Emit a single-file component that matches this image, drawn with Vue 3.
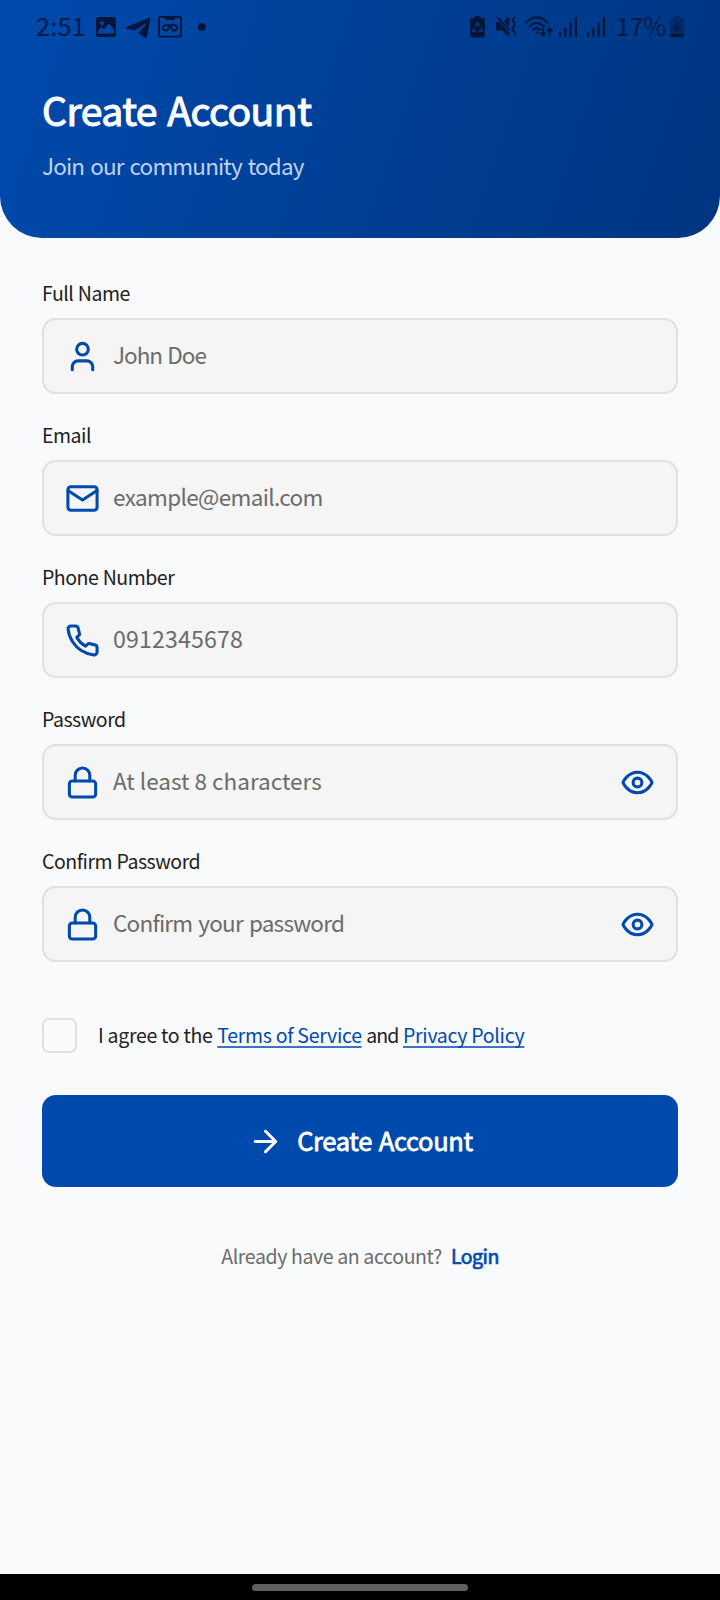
<script setup>
const fields = [
  { label: 'Full Name', placeholder: 'John Doe', icon: 'user', key: 'name' },
  { label: 'Email', placeholder: 'example@email.com', icon: 'mail', key: 'email' },
  { label: 'Phone Number', placeholder: '0912345678', icon: 'phone', key: 'phone' },
  { label: 'Password', placeholder: 'At least 8 characters', icon: 'lock', key: 'password', secret: true },
  { label: 'Confirm Password', placeholder: 'Confirm your password', icon: 'lock', key: 'confirm', secret: true },
]
</script>

<template>
  <div class="screen">
    <header class="hero">
      <div class="status">
        <span class="clock">2:51</span>
        <svg class="s-image" width="20" height="20" viewBox="0 0 20 20">
          <path fill-rule="evenodd" d="M2.5 0h15A2.500 2.500 0 0 1 20 2.500v15a2.500 2.500 0 0 1-2.500 2.500h-15A2.500 2.500 0 0 1 0 17.500v-15A2.500 2.500 0 0 1 2.500 0zM2 16.500h16v-3.500l-5.500-6.500-4.500 6-2.500-2.500L2 14zM6 4.200a1.900 1.900 0 1 0 0 3.800 1.900 1.900 0 0 0 0-3.800z" />
        </svg>
        <svg class="s-send" width="25" height="22" viewBox="0 0 25 22">
          <path d="M.4 10.200 22.800.8q1.700-.5 1.400 1.300L21 19.800q-.5 1.900-2.200.9l-6.300-4.600 7.600-9.300q.5-1-.6-.5L8.500 13.400.6 11.500q-1-.6-.2-1.300z" />
        </svg>
        <svg class="s-tape" width="24" height="22" viewBox="0 0 24 22">
          <rect x="1" y="1" width="22" height="19.600" rx="1.500" fill="none" stroke="currentColor" stroke-width="1.900" />
          <path d="M6 0h12l-1.500 4h-9z" />
          <path d="M7.700 9.100h8.600a2.700 2.700 0 1 1-2.700 2.700q0-1.200-1.600-1.200t-1.600 1.200a2.700 2.700 0 1 1-2.700-2.700z" fill="none" stroke="currentColor" stroke-width="1.800" />
        </svg>
        <i class="s-dot"></i>
        <span class="grow"></span>
        <svg class="s-saver" width="15" height="22" viewBox="0 0 15 22">
          <path d="M4.500 2V.8Q4.500 0 5.300 0h4.400q.8 0 .8.800V2H13q2 0 2 2v15.500q0 2-2 2H2q-2 0-2-2V4q0-2 2-2z" />
          <g fill="none" stroke="#023f98" stroke-width="1.300">
            <path d="M5.300 10.200 7.500 7l2.200 3.200M11 12l1.300 3.200H9M6 15.200H2.700L4 12" />
          </g>
        </svg>
        <svg class="s-mute" width="20" height="21" viewBox="0 0 20 21">
          <path d="M0 6h3.200L13.300 16.500V20.500L6.500 14.500H0zM7.800 5.200 13.300.3v10.900z" />
          <path d="M1.200 1.200 13.300 14.200" fill="none" stroke="currentColor" stroke-width="1.800" />
          <path d="M18.800 1.500q-3.800 2.200-1.300 4.500t0 4.500 0 4.500 1.300 4.500" fill="none" stroke="currentColor" stroke-width="1.900" />
        </svg>
        <svg class="s-wifi" width="29" height="22" viewBox="0 0 29 22">
          <g fill="none" stroke="currentColor" stroke-width="2.200" stroke-linecap="round">
            <path d="M1.200 6.200q10.500-9.600 21 0M4.600 10.200q7-6.600 14.200 0M8.200 13.600q3.500-2.900 6.800-.3" />
            <circle cx="11.800" cy="17" r=".5" />
            <path d="M18.200 12.500v6.500m-2.200-2 2.200 2.500 2.200-2.500M24.800 19v-6.500m-2.200 2.200 2.200-2.500 2.200 2.500" stroke-width="1.800" />
          </g>
        </svg>
        <svg v-for="n in 2" :key="n" class="s-signal" width="18" height="20" viewBox="0 0 18 20">
          <path d="M0 15.500h2.200V20H0zM5.200 11h2.200v9H5.200zM10.500 5.500h2.200V20h-2.200zM15.800 0H18v20h-2.200z" />
        </svg>
        <span class="percent">17%</span>
        <svg class="s-battery" width="14" height="22" viewBox="0 0 14 22">
          <path opacity=".4" d="M4 2V.8Q4 0 4.800 0h4.400q.8 0 .8.800V2h2q2 0 2 2v14H0V4q0-2 2-2z" />
          <path d="M0 18h14v1.500q0 1.800-2 1.800H2q-2 0-2-1.800z" />
          <path opacity=".6" d="M8.500 5.500 3 12h3l-.8 5L11 10.500H8z" />
        </svg>
      </div>
      <h1>Create Account</h1>
      <p class="tagline">Join our community today</p>
    </header>

    <main class="form">
      <div v-for="f in fields" :key="f.key" class="field" :class="f.key">
        <label>{{ f.label }}</label>
        <div class="input">
          <svg class="icon" viewBox="0 0 24 24">
            <template v-if="f.icon === 'user'">
              <path d="M19 21v-2a4 4 0 0 0-4-4H9a4 4 0 0 0-4 4v2" /><circle cx="12" cy="7" r="4" />
            </template>
            <template v-else-if="f.icon === 'mail'">
              <rect x="2" y="4" width="20" height="16" rx="2" /><path d="m22 6.500-10 6.500L2 6.500" />
            </template>
            <path v-else-if="f.icon === 'phone'" d="M22 16.920v3a2 2 0 0 1-2.180 2 19.790 19.790 0 0 1-8.630-3.070 19.500 19.500 0 0 1-6-6 19.790 19.790 0 0 1-3.070-8.670A2 2 0 0 1 4.110 2h3a2 2 0 0 1 2 1.720 12.840 12.840 0 0 0 .7 2.810 2 2 0 0 1-.45 2.110L8.090 9.910a16 16 0 0 0 6 6l1.270-1.270a2 2 0 0 1 2.110-.45 12.840 12.840 0 0 0 2.810.7A2 2 0 0 1 22 16.920z" />
            <template v-else>
              <rect x="3" y="11" width="18" height="11" rx="2" /><path d="M7 11V7a5 5 0 0 1 10 0v4" />
            </template>
          </svg>
          <span class="placeholder">{{ f.placeholder }}</span>
          <svg v-if="f.secret" class="icon" viewBox="0 0 24 24">
            <path d="M2 12s3-7 10-7 10 7 10 7-3 7-10 7-10-7-10-7Z" /><circle cx="12" cy="12" r="3" />
          </svg>
        </div>
      </div>

      <div class="agree">
        <i class="checkbox"></i>
        <p>
          <span class="lead">I agree to the</span>
          <a>Terms of Service</a>
          <span class="and">and</span>
          <a>Privacy Policy</a>
        </p>
      </div>

      <button class="submit" type="button">
        <svg class="icon" viewBox="0 0 24 24"><path d="M5 12h14M12 5l7 7-7 7" /></svg>
        <span>Create Account</span>
      </button>

      <p class="login"><span>Already have an account?</span><a>Login</a></p>
    </main>

    <footer class="navbar"><i></i></footer>
  </div>
</template>

<style>
body { margin: 0; background: #f8fafc; }
</style>

<style scoped>
.screen {
  width: 720px;
  height: 1600px;
  display: flex;
  flex-direction: column;
  background: #f8fafc;
  font-family: "Noto Sans CJK JP", "Noto Sans", sans-serif;
  overflow: hidden;
  white-space: nowrap;
}
.screen * { box-sizing: border-box; }
svg { display: block; flex: none; fill: currentColor; }
h1, p { margin: 0; font-weight: 400; }
.grow { flex: 1; }

.hero {
  height: 238px;
  flex: none;
  border-radius: 0 0 42px 42px;
  background: linear-gradient(108.3deg, #004aad 0%, #003580 100%);
  color: #fff;
}
.status {
  height: 53px;
  padding: 0 36px;
  display: flex;
  align-items: center;
  color: #00163a;
}
.clock, .percent {
  font-size: 25.200px;
  line-height: 51px;
  padding-bottom: 2px;
  letter-spacing: -0.500px;
  color: #001c48;
}
.clock { width: 60px; letter-spacing: 0.200px; }
.percent { width: 54px; margin-left: 11px; }
.s-send { margin-left: 10px; margin-top: 2px; }
.s-tape { margin-left: 7px; }
.s-dot { width: 8px; height: 8px; border-radius: 50%; background: currentColor; margin-left: 16px; }
.s-mute { margin-left: 11px; }
.s-wifi { margin-left: 9px; }
.s-signal { margin-left: 5px; }
.s-signal + .s-signal { margin-left: 10px; }

h1 {
  height: 58px;
  margin: 27px 0 0 42px;
  font-size: 39.200px;
  line-height: 58px;
  letter-spacing: -0.550px;
  word-spacing: 2px;
  -webkit-text-stroke: 1.100px #fff;
}
.tagline {
  margin: 9px 0 0 42px;
  font-size: 22.500px;
  line-height: 36px;
  letter-spacing: -0.860px;
  word-spacing: 1.800px;
  color: #bfd4f3;
}

.form {
  flex: 1;
  padding: 37px 42px 0;
}
.field { height: 142px; }
.field label {
  display: block;
  height: 43px;
  font-size: 19.500px;
  line-height: 36px;
  letter-spacing: -0.480px;
  word-spacing: 0.500px;
  color: #1f2020;
}
.input {
  height: 76px;
  border: 2px solid #e0e0e0;
  border-radius: 14px;
  background: #f5f5f5;
  display: flex;
  align-items: center;
  padding: 0 21px;
  color: #004aad;
}
.icon {
  width: 35px;
  height: 35px;
  fill: none;
  stroke: currentColor;
  stroke-width: 2.100;
  stroke-linecap: round;
  stroke-linejoin: round;
}
.placeholder {
  flex: 1;
  margin-left: 13px;
  padding-bottom: 5px;
  font-size: 22.500px;
  letter-spacing: -0.650px;
  color: #6b6b6b;
}
.name .placeholder { letter-spacing: -1px; word-spacing: 1.200px; }
.phone .placeholder { font-size: 23.200px; letter-spacing: 0.120px; }
.password .placeholder { letter-spacing: 0; }
.confirm .placeholder { letter-spacing: -0.770px; word-spacing: 1.700px; }

.agree {
  display: flex;
  align-items: center;
  height: 35px;
  margin-top: 33px;
  font-size: 19.500px;
  letter-spacing: -0.290px;
  color: #222;
}
.agree p { display: flex; gap: 4.700px; padding-bottom: 2px; }
.agree .and { letter-spacing: -1px; }
.checkbox {
  width: 35px;
  height: 35px;
  margin-right: 21px;
  border: 2px solid #e0e0e0;
  border-radius: 7px;
}
.agree a {
  color: #004aad;
  text-decoration: underline;
  text-decoration-thickness: 1.500px;
  text-decoration-color: #3f74bd;
  text-decoration-skip-ink: none;
  text-underline-offset: 3px;
}

.submit {
  width: 636px;
  height: 92px;
  margin-top: 42px;
  border: 0;
  border-radius: 14px;
  background: #004aad;
  color: #fff;
  display: flex;
  align-items: center;
  justify-content: center;
  gap: 14px;
  padding: 0 0 0 1px;
  font: 25.500px "Noto Sans CJK JP", "Noto Sans", sans-serif;
  letter-spacing: -0.350px;
  word-spacing: 1.500px;
  -webkit-text-stroke: 0.800px #fff;
}
.submit span { padding-bottom: 3px; }
.login {
  margin-top: 53px;
  display: flex;
  justify-content: center;
  gap: 9px;
  font-size: 19.500px;
  line-height: 31px;
  letter-spacing: -0.370px;
  color: #6b6b6b;
}
.login a { color: #004aad; letter-spacing: -0.500px; -webkit-text-stroke: 0.700px #004aad; }

.navbar {
  height: 26px;
  flex: none;
  background: #000;
  display: flex;
  justify-content: center;
  padding-top: 10px;
}
.navbar i { width: 216px; height: 7px; border-radius: 4px; background: #5f5f5f; }
</style>
